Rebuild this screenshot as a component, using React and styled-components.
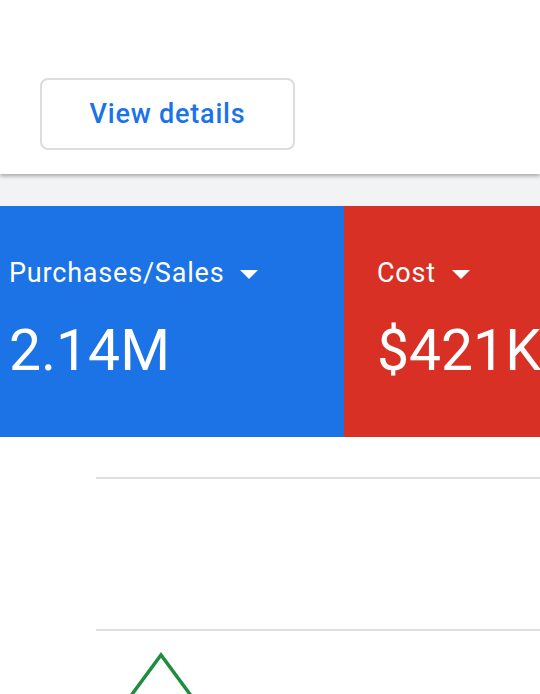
import React from "react";
import styled, { createGlobalStyle } from "styled-components";

const GlobalStyle = createGlobalStyle`
  html, body {
    margin: 0;
    padding: 0;
    background: #fff;
    overflow: hidden;
  }
  body {
    font-family: Roboto, "Liberation Sans", Arial, sans-serif;
  }
`;

const Page = styled.div`
  width: 540px;
  height: 694px;
  overflow: hidden;
`;

const Header = styled.div`
  position: relative;
  z-index: 1;
  height: 174px;
  box-sizing: border-box;
  padding: 78px 0 0 40px;
  background: #fff;
  box-shadow: 0 2px 4px rgba(0, 0, 0, 0.32);
`;

const OutlineButton = styled.button`
  width: 255px;
  height: 72px;
  box-sizing: border-box;
  border: 2px solid #dadce0;
  border-radius: 8px;
  background: #fff;
  color: #1a73e8;
  font-family: Roboto, "Liberation Sans", Arial, sans-serif;
  font-weight: 500;
  font-size: 27px;
  letter-spacing: 0.8px;
  padding: 0;
  cursor: pointer;
`;

const Band = styled.div`
  height: 32px;
  background: #f1f3f4;
`;

const Cards = styled.div`
  display: flex;
  height: 231px;
`;

const Card = styled.div`
  flex: ${(p) => (p.$width ? `0 0 ${p.$width}px` : "1")};
  box-sizing: border-box;
  padding: 52px 0 0 ${(p) => p.$pad}px;
  background: ${(p) => p.$bg};
  color: #fff;
  white-space: nowrap;
  overflow: hidden;
`;

const Label = styled.div`
  display: flex;
  align-items: center;
  gap: 16px;
  font-size: 27px;
  letter-spacing: 0.8px;
  line-height: 30px;
`;

const Caret = styled.span`
  width: 0;
  height: 0;
  border-left: 9px solid transparent;
  border-right: 9px solid transparent;
  border-top: 9px solid #fff;
  margin-top: 2px;
`;

const Value = styled.div`
  margin-top: 30px;
  font-size: 57px;
  line-height: 66px;
`;

const Chart = styled.div`
  padding: 40px 0 0 96px;
`;

const GridLine = styled.div`
  height: 2px;
  background: #dedede;
  margin-bottom: ${(p) => p.$gap || 0}px;
`;

const Marker = styled.svg`
  display: block;
  margin: 0 0 0 34px;
`;

const Metric = ({ label, value, bg, width, pad }) => (
  <Card $bg={bg} $width={width} $pad={pad}>
    <Label>
      {label}
      <Caret />
    </Label>
    <Value>{value}</Value>
  </Card>
);

const App = () => (
  <Page>
    <GlobalStyle />
    <Header>
      <OutlineButton>View details</OutlineButton>
    </Header>
    <Band />
    <Cards>
      <Metric label="Purchases/Sales" value="2.14M" bg="#1b73e6" width={344} pad={9} />
      <Metric label="Cost" value="$421K" bg="#d93025" pad={33} />
    </Cards>
    <Chart>
      <GridLine $gap={150} />
      <GridLine />
      <Marker width="70" height="70" viewBox="0 0 70 70">
        <polyline
          points="0,66 31,24 62,66"
          fill="none"
          stroke="#1e8e3e"
          strokeWidth="3.5"
        />
      </Marker>
    </Chart>
  </Page>
);

export default App;
